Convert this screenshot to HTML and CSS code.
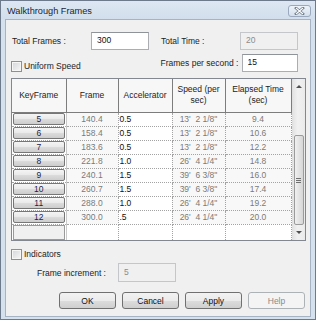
FILE: index.html
```html
<!DOCTYPE html>
<html lang="en">
<head>
  <meta charset="UTF-8">
  <title>Walkthrough Frames</title>
  <link rel="stylesheet" href="styles.css">
</head>
<body>

  <div class="window">
    <div class="titlebar">
      <span class="title">Walkthrough Frames</span>
      <span class="close">
        <svg width="11" height="8" viewBox="0 0 11 8">
          <path d="M2 1 L9 7 M9 1 L2 7" stroke="#6f7c8c" stroke-width="2.6" stroke-linecap="square"/>
          <path d="M2 1 L9 7 M9 1 L2 7" stroke="#fff" stroke-width="1.1"/>
        </svg>
      </span>
    </div>

    <div class="client">
      <div class="row first">
        <div class="group">
          <label class="lbl w79">Total Frames :</label>
          <input class="box w58" value="300">
        </div>
        <div class="group">
          <label class="lbl w79">Total Time :</label>
          <input class="box w58" value="20" disabled>
        </div>
      </div>

      <div class="row">
        <div class="group bottom">
          <span class="check"></span><span class="check-lbl">Uniform Speed</span>
        </div>
        <div class="group">
          <label class="lbl w81">Frames per second :</label>
          <input class="box w56" value="15">
        </div>
      </div>

      <div class="grid">
        <table>
          <colgroup>
            <col style="width:54px"><col style="width:52px"><col style="width:54px"><col style="width:53px"><col style="width:66px">
          </colgroup>
          <thead>
            <tr><th>KeyFrame</th><th>Frame</th><th>Accelerator</th><th>Speed (per sec)</th><th>Elapsed Time (sec)</th></tr>
          </thead>
          <tbody id="rows"></tbody>
        </table>
        <div class="scrollbar">
          <div class="arrow"><span class="tri up"></span></div>
          <div class="track"></div>
          <div class="thumb"><span class="grip"></span></div>
          <div class="arrow"><span class="tri down"></span></div>
        </div>
      </div>

      <div class="indicators">
        <span class="check"></span><span class="check-lbl">Indicators</span>
      </div>

      <div class="increment">
        <label class="lbl w81">Frame increment :</label>
        <input class="box w58 tall" value="5" disabled>
      </div>

      <div class="buttons">
        <button class="btn">OK</button>
        <button class="btn">Cancel</button>
        <button class="btn">Apply</button>
        <button class="btn" disabled>Help</button>
      </div>
    </div>
  </div>

  <script>
    const frames = [
      ["5", "140.4", "0.5", "13'  2 1/8\"", "9.4"],
      ["6", "158.4", "0.5", "13'  2 1/8\"", "10.6"],
      ["7", "183.6", "0.5", "13'  2 1/8\"", "12.2"],
      ["8", "221.8", "1.0", "26'  4 1/4\"", "14.8"],
      ["9", "240.1", "1.5", "39'  6 3/8\"", "16.0"],
      ["10", "260.7", "1.5", "39'  6 3/8\"", "17.4"],
      ["11", "288.0", "1.0", "26'  4 1/4\"", "19.2"],
      ["12", "300.0", ".5", "26'  4 1/4\"", "20.0"]
    ];
    const body = document.getElementById("rows");

    frames.forEach(f => {
      const tr = document.createElement("tr");
      tr.innerHTML =
        '<td class="key"><span class="keybtn">' + f[0] + '</span></td>' +
        '<td class="ro">' + f[1] + '</td>' +
        '<td class="acc">' + f[2] + '</td>' +
        '<td class="ro">' + f[3] + '</td>' +
        '<td class="ro">' + f[4] + '</td>';
      body.appendChild(tr);
    });

    const empty = document.createElement("tr");
    empty.className = "empty";
    empty.innerHTML = '<td class="key"><span class="keyblank"></span></td><td></td><td></td><td></td><td></td>';
    body.appendChild(empty);
  </script>

</body>
</html>
```

FILE: styles.css
```css
* { box-sizing: border-box; }
body { margin: 0; font-family: "Liberation Sans", Arial, sans-serif; font-size: 8.5px; color: #1c1c1c; background: #fff; }

.window { width: 316px; height: 320px; border: 1px solid #6c7a8c; background: #d6e1ee; display: flex; flex-direction: column; }
.titlebar { height: 18px; display: flex; align-items: flex-start; justify-content: space-between; padding: 0 4px 0 6px; background: linear-gradient(#dde7f3, #d2deec); }
.title { font-size: 9.2px; color: #1e2430; margin-top: 5px; }
.close { width: 23px; height: 12px; margin-top: 4px; border: 1px solid #9aa9bd; border-radius: 3px; background: linear-gradient(#eef3f9, #d5dfec); display: flex; align-items: center; justify-content: center; }
.close svg { display: block; }

.client { flex: 1; margin: 0 4px 2px 4px; border: 1px solid #a6b3c4; background: #f0f0f0; padding-top: 12px; }

.row { display: flex; height: 18px; padding-left: 6px; }
.row + .row { margin-top: 4px; }
.group { display: flex; align-items: center; width: 156px; }
.group.bottom { align-items: flex-end; padding-bottom: 0; margin-left: -1px; }
.lbl { display: block; white-space: nowrap; }
.w79 { width: 79px; }
.w81 { width: 81px; }
.w58 { width: 58px; }
.w56 { width: 56px; }

.box { height: 18px; padding: 0 0 2px 5px; font: inherit; color: #111; background: #fff; border: 1px solid #abadb3; border-top-color: #8f949b; outline: none; margin: 0; }
.box:disabled { background: #f0f0f0; color: #8c8c8c; border-color: #c4c6ca; }
.box.tall { height: 19px; }

.check { display: inline-block; width: 11px; height: 11px; border: 1px solid #8e8f8f; background: linear-gradient(135deg, #d3d5d9, #f7f7f7); box-shadow: inset 0 0 0 1px #f6f6f6; }
.check-lbl { margin-left: 2px; line-height: 11px; }

.grid { display: flex; margin: 6px 0 0 5px; width: 295px; height: 163px; border: 1px solid #828790; background: #fff; }
table { border-collapse: collapse; table-layout: fixed; width: 279px; }
th { height: 33px; padding: 0 2px; font-weight: normal; text-align: center; line-height: 11px; background: #f7f7f7; border-right: 1px solid #7d7d7d; border-bottom: 1px solid #7d7d7d; }
td { height: 14px; padding: 0; line-height: 12px; border-right: 1px dotted #a3a3a3; border-bottom: 1px dotted #a3a3a3; white-space: pre; }
td.ro { text-align: center; color: #7a7a7a; background: #f8f8f8; }
td.acc { padding-left: 1px; color: #111; }
td.key { padding: 0 1px; border-right: 1px solid #c9c9c9; }
.keybtn { display: block; height: 12px; line-height: 11px; text-align: center; color: #1c1c4a; border: 1px solid #767676; border-radius: 2px; background: linear-gradient(#f5f5f5, #e9e9e9 50%, #dcdcdc 51%, #cdcdcd); }
tr.empty td { height: 16px; border-bottom: none; background: #fff; }
.keyblank { display: block; height: 15px; border: 1px solid #9a9a9a; background: #f0f0f0; }

.scrollbar { width: 14px; display: flex; flex-direction: column; background: linear-gradient(90deg, #e4e4e4, #f1f1f1 40%, #eaeaea); border-left: 1px solid #e0e0e0; }
.arrow { height: 15px; display: flex; align-items: center; justify-content: center; }
.track { flex: 1; }
.thumb { height: 90px; margin: 0 1px; border: 1px solid #9b9b9b; border-radius: 2px; background: linear-gradient(90deg, #f0f0f0, #e3e3e3 50%, #d6d6d6); display: flex; align-items: center; justify-content: center; }
.grip { width: 5px; height: 5px; border-top: 1px solid #6f6f6f; border-bottom: 1px solid #6f6f6f; position: relative; }
.grip::after { content: ""; position: absolute; left: 0; right: 0; top: 1px; border-top: 1px solid #6f6f6f; }
.tri { width: 0; height: 0; border-left: 3px solid transparent; border-right: 3px solid transparent; }
.tri.up { border-bottom: 3px solid #505050; }
.tri.down { border-top: 3px solid #505050; }

.indicators { display: flex; align-items: center; margin: 8px 0 0 5px; height: 11px; }
.increment { display: flex; align-items: center; margin: 3px 0 0 31px; height: 19px; }

.buttons { display: flex; justify-content: flex-end; gap: 6px; margin-top: 10px; padding-right: 5px; }
.btn { width: 57px; height: 17px; padding: 0; font: inherit; color: #111; border: 1px solid #707070; border-radius: 3px; background: linear-gradient(#f2f2f2, #ebebeb 50%, #dddddd 51%, #cfcfcf); }
.btn:disabled { color: #8a8a8a; border-color: #adb2b5; background: #f4f4f4; }
```
